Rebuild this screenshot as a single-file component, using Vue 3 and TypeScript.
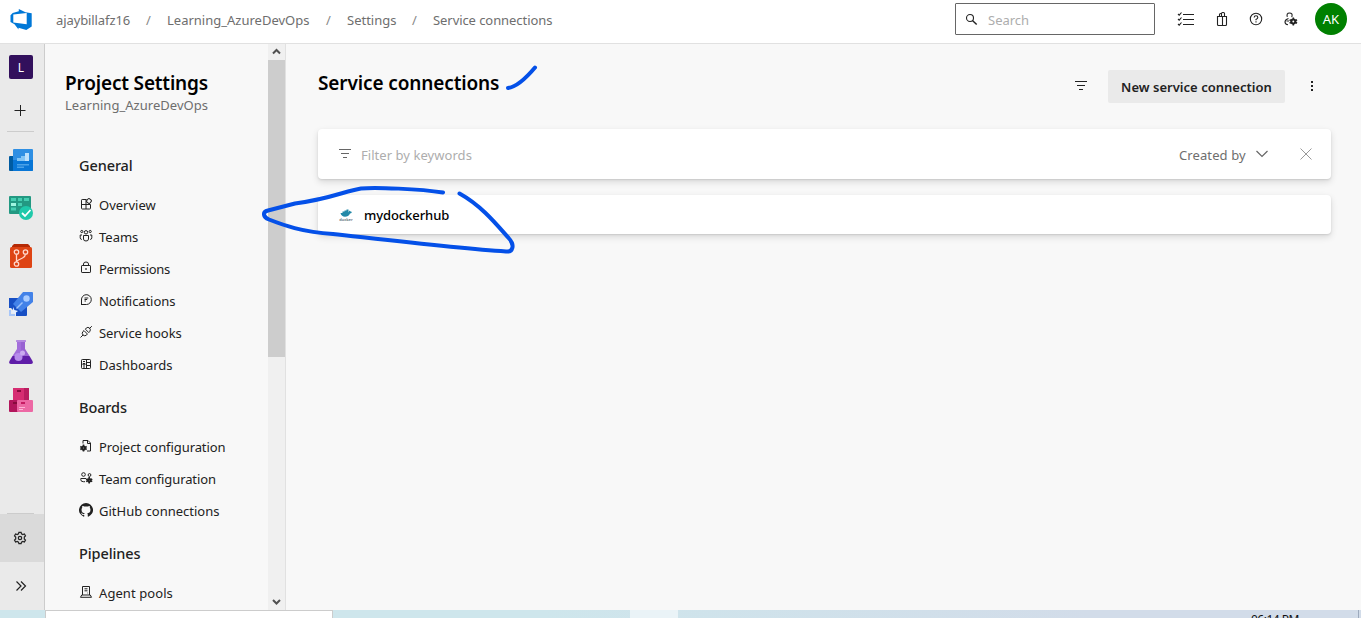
<script setup lang="ts">
interface MenuItem { label: string; icon: string; cls: string }
interface MenuGroup { title: string; items: MenuItem[] }

const gear = (x: number, y: number, r: number): string =>
  `<circle cx="${x}" cy="${y}" r="${r}" fill="none" stroke="currentColor" stroke-width="2.100"/>` +
  `<path fill="none" stroke="currentColor" stroke-width="1.600" d="M${x} ${y - r - 1.9}v1.500M${x} ${y + r + 1.9}v-1.500M${x - r - 1.7} ${y - r / 2 - .7}l1.300.8M${x + r + 1.7} ${y + r / 2 + .7}l-1.300-.8M${x + r + 1.7} ${y - r / 2 - .7}l-1.300.8M${x - r - 1.7} ${y + r / 2 + .7}l1.300-.8"/>`

const groups: MenuGroup[] = [
  {
    title: 'General',
    items: [
      { label: 'Overview', cls: 'n0', icon: '<path d="M7.500 2.500H3.200q-.7 0-.7.7v8.100q0 .7.700.7h7.600q.7 0 .7-.7V7.500h-9M7 2.500v9.500"/><rect x="8" y="2" width="4" height="4" rx=".8" transform="rotate(40 10 4)"/>' },
      { label: 'Teams', cls: 'n0', icon: '<circle cx="7" cy="3.300" r="1.700"/><circle cx="2.800" cy="2.500" r="1.100"/><circle cx="11.200" cy="2.500" r="1.100"/><path d="M4.500 6.500h5v3.500q0 2-2.500 2t-2.500-2zM3 6H1.200v2.800q0 1.500 1.600 1.700M11 6h1.800v2.800q0 1.500-1.600 1.700"/>' },
      { label: 'Permissions', cls: 'n3', icon: '<rect x="2.500" y="4.500" width="9" height="7" rx=".6"/><path d="M4.500 4.500V3Q4.500 1 7 1t2.500 2v1.500"/><circle cx="7" cy="8" r=".5"/>' },
      { label: 'Notifications', cls: 'n1', icon: '<path d="M2.500 11.500V7A4.900 4.900 0 1 1 7.500 11.500H2z"/><path d="M5.500 5h3.800M5.500 6.500h2.700M5.500 8h1.500"/>' },
      { label: 'Service hooks', cls: 'n1', icon: '<path d="M1.500 12.500 4 10M10.300 3.700l2.500-2.500M5 5.600l3.400 3.400-1 1.200q-1.600 1.300-3.400-.200-1.500-1.700-.200-3.300zM6.400 4.200l3.400 3.400 1-1.200q1.300-1.600-.2-3.300-1.700-1.500-3.300-.1z"/>' },
      { label: 'Dashboards', cls: 'n0', icon: '<rect x="2.500" y="2.500" width="9" height="9" rx=".8"/><path d="M7.500 2.500v9M4 4.500h2M4 6.500h2v1.500H4zM4 10h2M7.500 5.500h4M7.500 8.500h4"/>' },
    ],
  },
  {
    title: 'Boards',
    items: [
      { label: 'Project configuration', cls: 'n1', icon: `<path d="M4 4.500V1.500h5l2.500 2.500v8H8M8.500 1.500v3h3"/>${gear(4.5, 9, 1.5)}` },
      { label: 'Team configuration', cls: 'n2', icon: `<circle cx="4.500" cy="3.500" r="1.800"/><circle cx="10.500" cy="4" r="1.400"/><path d="M7 7.500H1.800v1.200q0 2 2.500 2H6"/>${gear(10.2, 9.3, 1.3)}` },
      { label: 'GitHub connections', cls: 'n0', icon: '<path fill="currentColor" stroke="none" transform="scale(.875)" d="M8 0a8 8 0 0 0-2.530 15.590c.4.070.550-.17.550-.38v-1.490c-2.230.48-2.700-.95-2.700-.95-.36-.92-.89-1.170-.89-1.170-.73-.5.060-.49.060-.49.800.060 1.220.83 1.220.83.720 1.220 1.870.87 2.330.66.070-.52.280-.87.510-1.070-1.780-.2-3.640-.89-3.640-3.950 0-.87.310-1.590.82-2.150-.08-.2-.36-1.020.08-2.120 0 0 .67-.21 2.200.82a7.600 7.600 0 0 1 4 0c1.530-1.040 2.200-.82 2.200-.82.440 1.100.160 1.920.080 2.120.510.560.820 1.270.820 2.150 0 3.070-1.870 3.750-3.650 3.950.290.250.540.730.540 1.480v2.200c0 .21.150.46.550.38A8 8 0 0 0 8 0Z"/>' },
    ],
  },
  {
    title: 'Pipelines',
    items: [
      { label: 'Agent pools', cls: 'n4', icon: '<path d="M3.500 10V1.500h7V10M1.500 12.300l1.200-2.300h8.600l1.200 2.300zM5.500 3.800h3M5.500 5.800h3M8.200 8h.5"/>' },
    ],
  },
]
const crumbs: string[] = ['ajaybillafz16', 'Learning_AzureDevOps', 'Settings', 'Service connections']
</script>

<template>
  <div class="screen">
    <header class="topbar">
      <svg class="logo" width="24" height="24" viewBox="0 0 24 24"><path fill="#0078d7" fill-rule="evenodd" d="M1.500 7.300 3.700 4.900 9.800 3.200V1L16.500 4.300l6.200 1V18.500L17.300 22 9.500 19.800v1.700L5.500 16.300 1.500 14zM4.300 6.500v7.900l13.400 1.800V4.900z"/></svg>
      <nav class="crumbs">
        <template v-for="(c, i) in crumbs" :key="c">
          <i v-if="i">/</i><span :class="'crumb' + i">{{ c }}</span>
        </template>
      </nav>
      <div class="search">
        <svg width="14" height="14" viewBox="0 0 14 14" fill="none" stroke="#222"><circle cx="5" cy="5" r="3.500" stroke-width="1.100"/><path d="m7.700 7.700 4 3.800" stroke-width="1.400"/></svg>
        <span>Search</span>
      </div>
      <div class="tools">
        <svg width="18" height="16" viewBox="0 0 18 16"><path d="M6 3.500h11M6 8.500h11M6 13.500h11M1 3l1.200 1.200L4.500 1.500M1 8l1.200 1.200L4.500 6.500M1 13l1.200 1.200 2.300-2.700"/></svg>
        <svg width="16" height="16" viewBox="0 0 16 16"><path d="M3.500 5.500h9v8q0 1-1 1h-7q-1 0-1-1zM5.500 5.500v-2q0-1 1-1h1M7.500 5.500v-3q0-1 1-1h1q1 0 1 1v3M8.500 5.500v9"/></svg>
        <svg width="16" height="16" viewBox="0 0 16 16"><circle cx="8" cy="8" r="5.700"/><path d="M6.200 6.500Q6.200 4.800 8 4.800t1.800 1.600Q9.800 7.500 8 8.400v.9M8 10.300v1.200"/></svg>
        <svg width="16" height="16" viewBox="0 0 16 16"><path d="M4.300 5.800Q3.200 2 6.500 2T9 5.200L8.500 6M5.500 7.500Q2 8.500 2 11 2 13.500 5 13.800M3.500 10h2.500"/><g v-html="gear(10.300, 10.500, 2)" /></svg>
      </div>
      <div class="avatar">AK</div>
    </header>

    <div class="body">
      <aside class="rail">
        <div class="tile">L</div>
        <svg class="plus" width="12" height="12" viewBox="0 0 12 12" stroke="#222"><path d="M.5 6.500h11M6.500 1v11"/></svg>
        <div class="rule"></div>
        <div class="products">
          <svg viewBox="0 0 24 24"><rect y="7" width="14" height="15" rx="1" fill="#005ba1"/><rect x="4" width="20" height="22" rx="1" fill="#2f8fe3"/><path fill="#0876d6" d="M4 11h20v10q0 1-1 1H4z"/><path fill="#83c5f5" d="M8 9h4v3H8zM12 7h4v5h-4z"/><path fill="#bfe1fb" d="M16 4h4v8h-4z"/><path fill="#4aa2e8" d="M8 15h12v1.500H8zM8 17.500h7V19H8z"/></svg>
          <svg viewBox="0 0 24 24"><rect width="22" height="18" rx="1" fill="#239982"/><path fill="#46ceb1" d="M2 2h5v3H2zM9 2h4v3H9zM15 2h5v3h-5zM9 7h4v3H9zM2 11.500h5v3H2z"/><path fill="#a0f5df" d="M2 7h5v3H2z"/><circle cx="17" cy="17" r="7" fill="#1fc9aa"/><path d="m13 17 3 3 5.500-6" fill="none" stroke="#fff" stroke-width="1.800"/></svg>
          <svg viewBox="0 0 24 24"><path fill="#b52a05" d="M5 0h14l2 2v4H3V2z"/><rect x="1" y="3" width="22" height="21" rx="1.500" fill="#de4414"/><g fill="none" stroke="#ffd7cb" stroke-width="1.300"><circle cx="7.500" cy="8" r="2.200"/><circle cx="16.500" cy="8" r="2.200"/><circle cx="7.500" cy="20" r="2.200"/><path d="M7.500 10.200v7.600M16.500 10.200q-.2 2.300-3 3.800l-4 2q-2 1-2 2"/></g></svg>
          <svg viewBox="0 0 24 24"><path fill="#174fc4" d="M0 6h9l9 9v8q0 1-1 1H7L0 17z"/><path fill="#4382e8" d="M14 0h9q1 0 1 1v9L12 20 4 12z"/><circle cx="17.500" cy="6.500" r="3.200" fill="#a9ccff"/><path d="m7.500 16.500 6-6" stroke="#9fc3fb" stroke-width="1.500"/><path fill="#eaeaea" d="M0 16h2l5 5v3H0z"/><path fill="#a7c6f9" d="M0 18h2v4h4v2H0z"/><path fill="#e4efff" d="m4 15 1.500 3 3.500 1-2 1.500V23l-2-2-3.500-.5L4 19z"/></svg>
          <svg viewBox="0 0 24 24"><path fill="#a36edb" d="M8 1h8v8l4.500 7h-17L8 9z"/><rect x="7" width="10" height="2" rx=".5" fill="#b48ae0"/><path fill="#8d55c9" d="M12 2h4v7l4.500 7H12z" opacity=".5"/><path fill="#5f1da8" d="M3.500 16h17l3 5q1.200 3-2 3h-19q-3.200 0-2-3z"/><circle cx="9.500" cy="17" r="4" fill="#b78ceb"/><circle cx="13.500" cy="13" r="2.500" fill="#caa9f0"/></svg>
          <svg viewBox="0 0 24 24"><rect x="4" width="16" height="14" fill="#d62d72"/><path fill="#b91d60" d="M15 0h5v12h-5z"/><rect y="12" width="12" height="12" rx="1" fill="#b2165c"/><rect x="8" y="12" width="16" height="12" rx="1" fill="#ed68a4"/><path fill="#870b3c" d="M8 2h4v2H8zM4 14h4v2H4z"/><path fill="#c71b62" d="M12 14h4v2h-4z"/><path stroke="#ffb1d5" d="M10 19.500h6M10 21.500h4"/></svg>
        </div>
        <div class="rail-bottom">
          <div class="rule"></div>
          <div class="settings"><svg width="14" height="14" viewBox="0 0 14 14" fill="none" stroke="#222" stroke-width="1.200"><path d="M5.900 1.300h2.200l.4 1.600 1.300.7 1.600-.6 1.100 1.900-1.200 1.200v1.800l1.200 1.200-1.100 1.900-1.600-.6-1.300.7-.4 1.600H5.900l-.4-1.600-1.300-.7-1.600.6-1.100-1.900 1.200-1.200V6.100L1.500 4.900 2.600 3l1.600.6 1.300-.7z"/><circle cx="7" cy="7" r="1.700"/></svg></div>
          <div class="expand"><svg width="14" height="14" viewBox="0 0 14 14" fill="none" stroke="#222" stroke-width="1.200"><path d="m2.500 2.500 4.500 4.500-4.500 4.500M7 2.500 11.500 7 7 11.500"/></svg></div>
        </div>
      </aside>

      <aside class="sidebar">
        <div class="side-content">
          <h2>Project Settings</h2>
          <p class="project">Learning_AzureDevOps</p>
          <section v-for="g in groups" :key="g.title">
            <h3>{{ g.title }}</h3>
            <div v-for="m in g.items" :key="m.label" class="item">
              <svg width="14" height="14" viewBox="0 0 14 14" fill="none" stroke="currentColor" v-html="m.icon" />
              <span :class="m.cls">{{ m.label }}</span>
            </div>
          </section>
        </div>
        <div class="scrollbar">
          <svg class="up" width="17" height="17" viewBox="0 0 17 17"><path d="m5 9.500 3.500-3.500L12 9.500"/></svg>
          <div class="thumb"></div>
          <svg class="down" width="17" height="17" viewBox="0 0 17 17"><path d="m5 7 3.500 3.500L12 7"/></svg>
        </div>
      </aside>

      <main>
        <div class="title-row">
          <h1>Service connections</h1>
          <svg class="filter" width="14" height="14" viewBox="0 0 14 14"><path d="M1 2.500h12M3 6.500h8M5 10.500h4"/></svg>
          <button>New service connection</button>
          <svg class="more" width="14" height="14" viewBox="0 0 14 14"><path fill="#222" stroke="none" d="M6 2h2v2H6zM6 6h2v2H6zM6 10h2v2H6z"/></svg>
        </div>
        <div class="card filterbar">
          <svg class="filter" width="14" height="14" viewBox="0 0 14 14"><path d="M1 2.500h12M3 6.500h8M5 10.500h4"/></svg>
          <span class="keywords">Filter by keywords</span>
          <span class="created">Created by</span>
          <svg class="chev" width="14" height="14" viewBox="0 0 14 14"><path d="m1.500 4 5.500 5.500L12.500 4"/></svg>
          <svg class="close" width="14" height="14" viewBox="0 0 14 14"><path d="m1.500 1.500 11 11M12.500 1.500l-11 11"/></svg>
        </div>
        <div class="card connection">
          <svg width="14" height="14" viewBox="0 0 14 14"><path fill="#2389a8" d="M1.500 5h2V3.500h2V2.500h2v-1h2v3l.9-2 .8.800L13 4q-1 1.500-2 1.500Q9.500 8.800 6 8.800 2.500 8.800 1.500 5z"/><text x="7" y="12.600" text-anchor="middle" font-size="4" font-weight="600" fill="#566b76">docker</text></svg>
          <span>mydockerhub</span>
        </div>
      </main>
    </div>

    <footer class="taskbar">
      <div class="start"></div><div class="find"></div><div class="active"></div><div class="clock">06:14 PM</div><div class="desk"></div>
    </footer>

    <svg class="ink" width="1361" height="618" viewBox="0 0 1361 618">
      <path d="M508 88c8-1 19-11 27-20.500"/>
      <path d="M443 192.500C420 189 375 187 361 188.500 345 191 330 199 295 203.500L268 210.500C262 212 263 217 269 219.500 283 225 302 232 333 234 370 238 456 248.500 506 251.500 513 252.500 515 245 509 238.500 497 225 482 206 459.500 193.500"/>
    </svg>
  </div>
</template>

<style>
body { margin: 0; overflow: hidden; }
</style>

<style scoped>
* { box-sizing: border-box; }
.screen { position: relative; width: 1361px; height: 618px; overflow: hidden; display: flex; flex-direction: column; background: #f8f8f8; font-family: "Noto Sans", "Open Sans", sans-serif; font-size: 13px; color: #222; }
svg { flex: none; display: block; }
h1, h2, h3, p { margin: 0; white-space: nowrap; }
span { white-space: nowrap; }
.topbar { height: 44px; flex: none; display: flex; background: #fff; border-bottom: 1px solid #e1e1e1; }
.logo { margin: 8px 0 0 9px; }
.crumbs { display: flex; margin-left: 23px; height: 40px; align-items: center; color: #6e6e6e; width: 899px; }
.crumbs i { font-style: normal; width: 37px; text-align: center; color: #888; }
.crumb0 { width: 74px; letter-spacing: -.1px; } .crumb1 { width: 143px; } .crumb2 { width: 49px; } .crumb3 { width: 119px; letter-spacing: -.07px; }
.search { width: 200px; height: 32px; margin-top: 3px; border: 1px solid #666; border-radius: 1px; display: flex; align-items: center; padding-left: 9px; gap: 9px; color: #adadad; }
.search svg { margin-top: 1px; }
.search span { padding-top: 2px; }
.tools { display: flex; margin: 11px 0 0 22px; gap: 18px; width: 138px; }
.tools svg { fill: none; stroke: #222; color: #222; stroke-width: 1.100; }
.tools svg + svg { margin-left: 1px; margin-right: -1px; }
.tools svg:last-child { margin-left: 2px; }
.avatar { width: 32px; height: 32px; margin-top: 3px; border-radius: 50%; background: #008000; color: #fff; text-align: center; line-height: 32px; }
.body { height: 566px; flex: none; display: flex; }
.rail { width: 45px; background: #eaeaea; border-right: 1px solid #ccc; display: flex; flex-direction: column; }
.tile { width: 24px; height: 24px; margin: 11px 0 0 9px; border-radius: 2px; background: #32105c; color: #fff; font-size: 12px; line-height: 25px; text-align: center; }
.plus { margin: 25px 0 0 14px; }
.rule { width: 27px; height: 1px; margin-left: 7px; background: #ccc; }
.plus + .rule { margin-top: 15px; }
.products { display: flex; flex-direction: column; gap: 24px; margin: 16px 0 0 9px; }
.products svg { width: 24px; height: 24px; }
.products svg:first-child { transform: translateY(1px); }
.rail-bottom { margin-top: auto; }
.settings { height: 48px; background: #dadada; display: flex; padding: 17px 0 0 13px; }
.expand { height: 48px; padding: 17px 0 0 14px; }
.sidebar { width: 241px; border-right: 1px solid #e1e1e1; display: flex; }
.side-content { width: 223px; padding: 24px 0 0 20px; overflow: hidden; height: 566px; }
h2, h1 { font-size: 19px; line-height: 30px; font-weight: 600; color: #000; letter-spacing: -.17px; }
h1 { letter-spacing: -.12px; }
.project { color: #6e6e6e; line-height: 16px; margin-top: -1px; letter-spacing: .03px; }
section { padding-left: 14px; }
h3 { font-size: 14.500px; font-weight: 500; line-height: 24px; padding: 16px 0 10px; height: 50px; letter-spacing: -.1px; }
.project + section h3 { margin-top: 24px; }
.item { height: 32px; display: flex; align-items: center; gap: 6px; }
.item svg { margin-top: 1px; }
.item span { padding-top: 4px; }
.n1 { letter-spacing: -.08px; } .n2 { letter-spacing: -.11px; } .n3 { letter-spacing: -.27px; } .n4 { letter-spacing: .08px; }
.scrollbar { width: 17px; background: #f0f0f0; display: flex; flex-direction: column; }
.scrollbar path { fill: none; stroke: #505050; stroke-width: 2; }
.thumb { height: 297px; background: #cdcdcd; margin-top: -1px; }
.down { margin-top: auto; }
main { width: 1075px; padding: 26px 30px 0 32px; }
.title-row { height: 33px; display: flex; }
.title-row h1 { line-height: 26px; width: 756px; }
.filter { fill: none; stroke: #222; stroke-width: 1.200; }
.title-row .filter { margin-top: 9px; }
button { width: 177px; height: 33px; margin: 0 20px 0 20px; padding: 0; border: 0; border-radius: 2px; background: #eaeaea; color: #222; font: 600 13px/35px "Noto Sans", "Open Sans", sans-serif; letter-spacing: .02px; white-space: nowrap; }
.more { margin-top: 9px; }
.card { background: #fff; border-radius: 4px; box-shadow: 0 3px 7px rgba(0,0,0,.13), 0 1px 2px rgba(0,0,0,.1); display: flex; align-items: center; }
.filterbar { height: 50px; margin-top: 26px; padding-left: 20px; color: #6e6e6e; }
.filterbar span { padding-top: 2px; }
.filterbar .filter { stroke: #666; }
.keywords { color: #adadad; margin-left: 9px; width: 818px; letter-spacing: .05px; }
.created { width: 67px; letter-spacing: .1px; }
.chev { margin-left: 9px; fill: none; stroke: #666; stroke-width: 1.200; }
.close { margin-left: 30px; fill: none; stroke: #999; }
.connection { height: 39px; margin-top: 16px; padding-left: 21px; gap: 11px; font-weight: 500; color: #000; }
.connection span { padding-top: 1px; letter-spacing: -.09px; }
.taskbar { height: 8px; flex: none; display: flex; background: linear-gradient(90deg, #cee6ec 40%, #d2dce9 80%); overflow: hidden; }
.start { width: 45px; }
.find { width: 288px; background: #fff; border: 1px solid #ccc; border-bottom: 0; }
.active { width: 48px; margin-left: 297px; background: #eaf3f7; }
.clock { margin-left: 573px; width: 107px; font-size: 12px; line-height: 16px; padding-top: 2px; color: #111; letter-spacing: -.5px; }
.desk { width: 1px; background: #9daabd; }
.ink { position: absolute; left: 0; top: 0; fill: none; stroke: #0450e8; stroke-width: 4; stroke-linecap: round; stroke-linejoin: round; pointer-events: none; }
</style>
